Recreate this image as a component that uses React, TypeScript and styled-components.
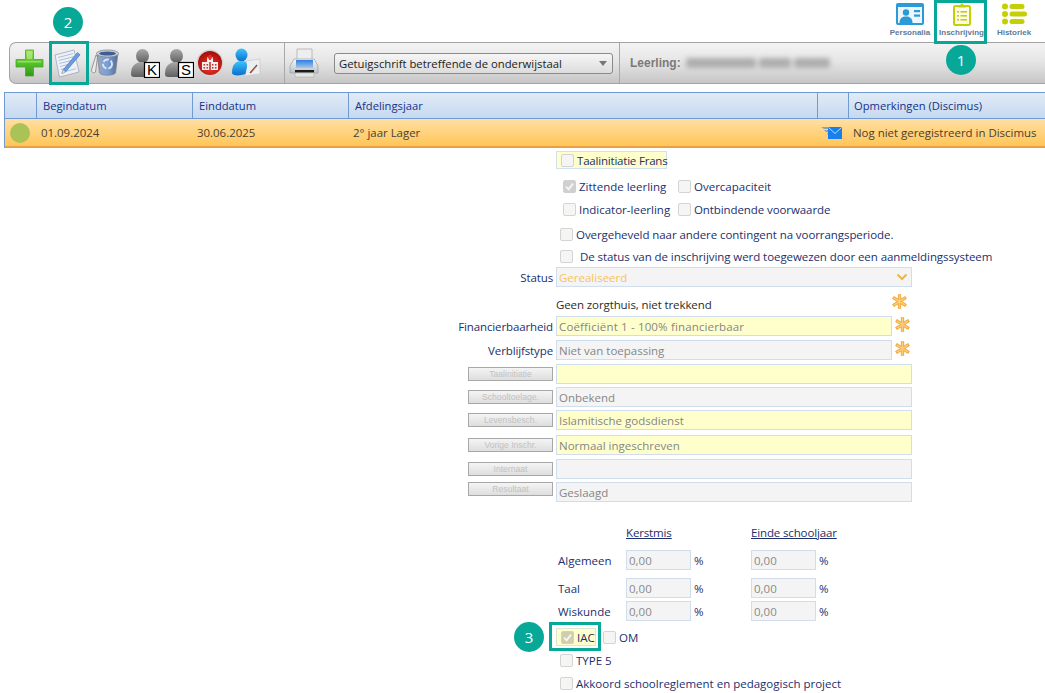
import React from "react";
import styled, { createGlobalStyle } from "styled-components";

const FONT = `"Open Sans", "Noto Sans", "Liberation Sans", sans-serif`;

const Global = createGlobalStyle`
  html, body { margin: 0; padding: 0; background: #fff; }
  body { font-family: ${FONT}; font-size: 11.5px; overflow: hidden; }
`;

const Page = styled.div`
  position: relative;
  width: 1045px;
  height: 693px;
  overflow: hidden;
`;

/* top tabs */
const TopBar = styled.div`
  height: 42px;
  display: flex;
  justify-content: flex-end;
  padding-right: 4px;
`;
const Tab = styled.div<{ $w: number }>`
  width: ${p => p.$w}px;
  display: flex;
  flex-direction: column;
  align-items: center;
  padding-top: 2px;
  box-sizing: border-box;
`;
const TabIcon = styled.div`
  height: 24px;
  display: flex;
  align-items: center;
  justify-content: center;
`;
const TabLabel = styled.div`
  font-family: "Liberation Sans", sans-serif;
  font-weight: 700;
  font-size: 8px;
  line-height: 10px;
  margin-top: 2px;
  color: #5d7b98;
  white-space: nowrap;
`;

/* toolbar */
const Toolbar = styled.div`
  height: 42px;
  margin-left: 9px;
  box-sizing: border-box;
  border: 1px solid #a3a3a3;
  border-right: none;
  border-radius: 7px 0 0 7px;
  background: linear-gradient(#f3f3f3, #e6e6e6 45%, #c6c6c6);
  display: flex;
  align-items: center;
`;
const ToolSlot = styled.div<{ $left: number }>`
  margin-left: ${p => p.$left}px;
  display: flex;
  align-items: center;
`;
const ToolDivider = styled.div<{ $left: number }>`
  align-self: stretch;
  width: 1px;
  background: #a8a8a8;
  margin-left: ${p => p.$left}px;
`;
const ReportSelect = styled.div`
  margin-left: 15px;
  width: 279px;
  height: 21px;
  box-sizing: border-box;
  border: 1px solid #8a8a8a;
  border-radius: 3px;
  background: linear-gradient(#f6f6f6, #dcdcdc);
  display: flex;
  align-items: center;
  justify-content: space-between;
  padding: 0 5px 0 4px;
  color: #222;
  font-size: 11.3px;
`;
const SelectArrow = styled.span`
  width: 0;
  height: 0;
  border-left: 4px solid transparent;
  border-right: 4px solid transparent;
  border-top: 5px solid #777;
`;
const StudentLabel = styled.div`
  margin-left: 10px;
  font-family: "Liberation Sans", sans-serif;
  font-weight: 700;
  font-size: 12px;
  color: #7a7a7a;
`;
const BlurredName = styled.div`
  margin-left: 5px;
  display: flex;
  gap: 3px;
  filter: blur(2.5px);
`;
const BlurBar = styled.span<{ $w: number }>`
  width: ${p => p.$w}px;
  height: 10px;
  background: #aeaeae;
  border-radius: 3px;
`;

/* table */
const Table = styled.div`
  margin: 8px 0 0 4px;
  border-left: 1px solid #6f9bd1;
`;
const TableGrid = styled.div`
  display: grid;
  grid-template-columns: 32px 156px 156px 469px 31px 1fr;
`;
const HeadRow = styled(TableGrid)`
  height: 27px;
  box-sizing: border-box;
  border-top: 1px solid #6f9bd1;
  border-bottom: 1px solid #6f9bd1;
  background: linear-gradient(#e1ebf7, #c6d9f0);
`;
const HeadCell = styled.div`
  border-right: 1px solid #6f9bd1;
  padding-left: 6px;
  display: flex;
  align-items: center;
  color: #15318a;
  font-size: 11.2px;
  &:last-child { border-right: none; padding-left: 5px; }
`;
const DataRow = styled(TableGrid)`
  height: 29px;
  box-sizing: border-box;
  border-bottom: 2px solid #e8a043;
  background: linear-gradient(#ffdfa3, #ffc658);
`;
const DataCell = styled.div`
  padding-left: 4px;
  display: flex;
  align-items: center;
  color: #4a4030;
  font-size: 11.45px;
  white-space: nowrap;
`;
const StatusDot = styled.span`
  width: 20px;
  height: 20px;
  border-radius: 50%;
  background: #a9c356;
  margin-left: 1px;
`;

/* form */
const Form = styled.div``;
const Row = styled.div<{ $top: number; $h?: number; $pad?: number }>`
  margin-top: ${p => p.$top}px;
  height: ${p => p.$h ?? 20}px;
  padding-left: ${p => p.$pad ?? 0}px;
  display: flex;
  align-items: center;
  white-space: nowrap;
`;
const Flag = styled.div`
  width: 111px;
  height: 18px;
  box-sizing: border-box;
  border: 1px solid #cfe0ef;
  background: #ffffcc;
  display: flex;
  align-items: center;
  padding-left: 4px;
  gap: 2px;
`;
const Box = styled.span<{ $on?: boolean; $tint?: boolean }>`
  width: 13px;
  height: 13px;
  flex: none;
  box-sizing: border-box;
  border: 1px solid ${p => (p.$on ? "#d0d0d0" : "#d4d4d4")};
  border-radius: 2px;
  background: ${p => (p.$on ? (p.$tint ? "#cfcfae" : "#d0d0d0") : "#f5f5f3")};
  display: inline-flex;
  align-items: center;
  justify-content: center;
`;
const CheckText = styled.span<{ $gap?: number; $track?: number }>`
  color: #1c2f6e;
  margin-left: ${p => p.$gap ?? 3}px;
  letter-spacing: ${p => p.$track ?? 0}px;
`;
const Check = styled.span<{ $width?: number; $left?: number }>`
  display: inline-flex;
  align-items: center;
  width: ${p => (p.$width ? `${p.$width}px` : "auto")};
  margin-left: ${p => p.$left ?? 0}px;
`;
const LabelCell = styled.div`
  width: 553px;
  margin-right: 3px;
  flex: none;
  display: flex;
  justify-content: flex-end;
  color: #1c2f6e;
  letter-spacing: -0.12px;
`;
const Field = styled.div<{ $wide?: boolean; $yellow?: boolean; $muted?: boolean; $track?: number }>`
  width: ${p => (p.$wide ? 356 : 336)}px;
  height: 20px;
  box-sizing: border-box;
  border: 1px solid #cfdded;
  background: ${p => (p.$yellow ? "#ffffcc" : "#f4f4f4")};
  padding: 0 3px 0 2px;
  display: flex;
  align-items: center;
  justify-content: space-between;
  color: ${p => (p.$muted ? "#f8c35c" : "#868686")};
  letter-spacing: ${p => p.$track ?? 0}px;
`;
const SideButton = styled.div<{ $raised?: boolean }>`
  width: 85px;
  height: 14px;
  box-sizing: border-box;
  border: 1px solid #a8a8a8;
  background: linear-gradient(#f4f4f4, #dedede);
  display: flex;
  align-items: center;
  justify-content: center;
  font-family: "Liberation Sans", sans-serif;
  font-size: 8.6px;
  letter-spacing: 0;
  color: #c2c2c2;
  transform: translateY(${p => (p.$raised ? -3 : 0)}px);
`;
const Plain = styled.div`
  width: 333px;
  margin-top: 2px;
  color: #2c2c2c;
  letter-spacing: -0.1px;
`;
const CareRow = styled(Row)`
  padding-left: 556px;
  align-items: flex-start;
`;
const StarSlot = styled.span<{ $up?: number }>`
  margin-left: 3px;
  display: flex;
  transform: translateY(${p => -(p.$up ?? 0)}px);
`;
const GradeLabel = styled.div`
  width: 68px;
  margin-left: 558px;
  color: #1c2f6e;
`;
const GradeHead = styled.div<{ $w: number; $left?: number }>`
  width: ${p => p.$w}px;
  margin-left: ${p => p.$left ?? 0}px;
  color: #1c2f6e;
  text-decoration: underline;
  letter-spacing: -0.14px;
`;
const GradeInput = styled.div`
  width: 65px;
  height: 20px;
  box-sizing: border-box;
  border: 1px solid #cfdded;
  background: #f4f4f4;
  padding-left: 2px;
  display: flex;
  align-items: center;
  color: #8a8a8a;
`;
const Percent = styled.span`
  width: 60px;
  box-sizing: border-box;
  padding-left: 3px;
  color: #1c2f6e;
`;
const IacBox = styled.div`
  margin-left: 556px;
  width: 40px;
  height: 18px;
  box-sizing: border-box;
  border: 1px solid #dbe6d8;
  background: #ffffcc;
  padding-left: 4px;
  display: flex;
  align-items: center;
`;

/* annotations */
const Frame = styled.div<{ $x: number; $y: number; $w: number; $h: number }>`
  position: absolute;
  left: ${p => p.$x}px;
  top: ${p => p.$y}px;
  width: ${p => p.$w}px;
  height: ${p => p.$h}px;
  box-sizing: border-box;
  border: 3px solid #08a898;
`;
const Badge = styled.div<{ $cx: number; $cy: number }>`
  position: absolute;
  left: ${p => p.$cx - 15}px;
  top: ${p => p.$cy - 15}px;
  width: 30px;
  height: 30px;
  border-radius: 50%;
  background: #08a898;
  color: #fff;
  font-size: 15px;
  display: flex;
  align-items: center;
  justify-content: center;
`;

/* drawings */
const CheckMark = () => (
  <svg width="9" height="9" viewBox="0 0 9 9">
    <path d="M1 4.6 L3.6 7.2 L8 1.6" fill="none" stroke="#f4f4f4" strokeWidth="1.9" />
  </svg>
);
const Star = () => (
  <svg width="15" height="15" viewBox="0 0 15 15">
    <g stroke="#eea83f" strokeWidth="3.3">
      <path d="M7.5 .3V14.7M1 3.4L14 11.6M14 3.4L1 11.6" />
    </g>
    <g stroke="#fdcc78" strokeWidth="1.5">
      <path d="M7.5 1V14M1.8 3.9L13.2 11.1M13.2 3.9L1.8 11.1" />
    </g>
  </svg>
);
const Chevron = () => (
  <svg width="12" height="8" viewBox="0 0 12 8">
    <path d="M1.5 1.5L6 6L10.5 1.5" fill="none" stroke="#f4b33f" strokeWidth="2" />
  </svg>
);
const PersonaliaIcon = () => (
  <svg width="28" height="22" viewBox="0 0 28 22">
    <rect width="28" height="22" rx="2" fill="#2a9bd6" />
    <rect x="2" y="4" width="24" height="16" fill="#eef6fb" />
    <circle cx="10" cy="9.5" r="3.2" fill="#2a9bd6" />
    <path d="M3.5 20c0-5 3-6.500 6.500-6.500s6.500 1.500 6.500 6.500z" fill="#2a9bd6" />
    <rect x="18" y="7" width="6" height="2.200" fill="#2a9bd6" />
    <rect x="18" y="11.500" width="6" height="2.200" fill="#2a9bd6" />
  </svg>
);
const ClipboardIcon = () => (
  <svg width="18" height="24" viewBox="0 0 18 24">
    <rect x="1" y="4" width="16" height="19" rx="1.500" fill="#fafbe8" stroke="#c4cf04" strokeWidth="2" />
    <path d="M5 5.500V3h2.500a1.500 1.500 0 0 1 3 0H13v2.500z" fill="#c4cf04" />
    <g fill="#c4cf04">
      <rect x="4" y="9" width="2" height="1.600" />
      <rect x="7.500" y="9" width="6.500" height="1.600" />
      <rect x="4" y="13" width="2" height="1.600" />
      <rect x="7.500" y="13" width="6.500" height="1.600" />
      <rect x="4" y="17" width="2" height="1.600" />
      <rect x="7.500" y="17" width="6.500" height="1.600" />
    </g>
  </svg>
);
const HistoryIcon = () => (
  <svg width="25" height="22" viewBox="0 0 25 22">
    <g fill="#c4cf04">
      <circle cx="3" cy="3.500" r="3" />
      <rect x="7.500" y="1" width="15" height="5" rx="2.500" />
      <circle cx="3" cy="11" r="3" />
      <rect x="7.500" y="8.500" width="17.500" height="5" rx="2.500" />
      <circle cx="3" cy="18.500" r="3" />
      <rect x="7.500" y="16" width="15" height="5" rx="2.500" />
    </g>
  </svg>
);
const PlusIcon = () => (
  <svg width="29" height="28" viewBox="0 0 29 28">
    <defs>
      <linearGradient id="pg" x1="0" y1="0" x2="0" y2="1">
        <stop offset="0" stopColor="#9fe35f" />
        <stop offset=".5" stopColor="#56c22c" />
        <stop offset="1" stopColor="#2f9a17" />
      </linearGradient>
    </defs>
    <path d="M10.500 1h8v9.500H28v7.500h-9.500V27h-8V18H1v-7.500h9.500z" fill="url(#pg)" stroke="#4aa52b" strokeWidth=".8" />
    <path d="M12 2.500h5V10h-5zM2.500 12H26v1.500H2.500z" fill="#c3f08f" opacity=".55" />
  </svg>
);
const NotepadIcon = () => (
  <svg width="27" height="29" viewBox="0 0 27 29">
    <path d="M1 6L20 1L25 23L5.500 28z" fill="#eef2f8" stroke="#9aa7ba" strokeWidth=".8" />
    <g stroke="#9db2d3" strokeWidth=".8">
      <path d="M4 8.500L19 4.600M4.700 11.500L20 7.600M5.400 14.500L18 11.300M6 17.500L16 15M6.700 20.500L14 18.600M7.400 23.500L22 19.700" />
    </g>
    <path d="M9 21L23.500 3.500L26 5.800L11.500 23L8 24.500z" fill="#6c9cdf" stroke="#3c6cb4" strokeWidth=".6" />
    <path d="M8 24.500L9 21L11.500 23z" fill="#f3d6ac" />
  </svg>
);
const BinIcon = () => (
  <svg width="30" height="28" viewBox="0 0 30 28">
    <defs>
      <linearGradient id="bg" x1="0" y1="0" x2="1" y2="0">
        <stop offset="0" stopColor="#9aa8bd" />
        <stop offset=".5" stopColor="#7a9fd8" />
        <stop offset="1" stopColor="#566c8e" />
      </linearGradient>
    </defs>
    <path d="M6 6L1.500 21c0 2.500 2 3.500 4 2L7.500 8z" fill="#ececec" stroke="#8d8d8d" strokeWidth=".9" />
    <path d="M7 4L9.500 24c2 3 14 3 16 0L28 4z" fill="url(#bg)" stroke="#7b7f88" strokeWidth=".7" />
    <ellipse cx="17.500" cy="4.500" rx="11" ry="3.500" fill="#d2d5da" stroke="#7f8694" strokeWidth=".8" />
    <ellipse cx="17.500" cy="4.500" rx="8.500" ry="2" fill="#3d5f96" />
    <circle cx="17.500" cy="15" r="4.500" fill="none" stroke="#dbe7f8" strokeWidth="1.800" strokeDasharray="6 2" />
  </svg>
);
const PersonLetter = ({ letter, id }: { letter: string; id: string }) => (
  <svg width="30" height="30" viewBox="0 0 30 30">
    <defs>
      <linearGradient id={id} x1="0" y1="0" x2="0" y2="1">
        <stop offset="0" stopColor="#a8a8a8" />
        <stop offset="1" stopColor="#5f5f5f" />
      </linearGradient>
    </defs>
    <ellipse cx="12.500" cy="8" rx="6.500" ry="7" fill={`url(#${id})`} />
    <path d="M1 26c0-9 5-12 11.500-12S22 17 22 29H4C2 29 1 28 1 26z" fill={`url(#${id})`} />
    <rect x="14.500" y="14.500" width="15" height="15" fill="#fff" stroke="#000" strokeWidth="1.200" />
    <text x="22" y="27" textAnchor="middle" fontFamily="Liberation Sans, sans-serif" fontSize="15" fill="#000">{letter}</text>
  </svg>
);
const HospitalIcon = () => (
  <svg width="28" height="28" viewBox="0 0 28 28">
    <defs>
      <radialGradient id="hg" cx=".5" cy=".65" r=".6">
        <stop offset="0" stopColor="#ee3a30" />
        <stop offset="1" stopColor="#a90f0c" />
      </radialGradient>
    </defs>
    <circle cx="14" cy="14" r="13.500" fill="#d6d6d6" />
    <circle cx="14" cy="14" r="12" fill="url(#hg)" />
    <path d="M6 13h5V8h6v5h5v8H6z" fill="#f8eeee" />
    <path d="M13 6h2v1.500h1.500v2H15V11h-2V9.500h-1.500v-2H13z" fill="#e8332a" />
    <g fill="#c03a34">
      <rect x="7.500" y="15" width="1.600" height="1.600" />
      <rect x="10.500" y="15" width="1.600" height="1.600" />
      <rect x="15.900" y="15" width="1.600" height="1.600" />
      <rect x="18.900" y="15" width="1.600" height="1.600" />
      <rect x="7.500" y="18" width="1.600" height="1.600" />
      <rect x="10.500" y="18" width="1.600" height="1.600" />
      <rect x="15.900" y="18" width="1.600" height="1.600" />
      <rect x="18.900" y="18" width="1.600" height="1.600" />
      <rect x="13.200" y="13" width="1.600" height="8" />
    </g>
  </svg>
);
const PersonChartIcon = () => (
  <svg width="30" height="30" viewBox="0 0 30 30">
    <defs>
      <linearGradient id="blu" x1="0" y1="0" x2="0" y2="1">
        <stop offset="0" stopColor="#3cc4fa" />
        <stop offset="1" stopColor="#0a6ed0" />
      </linearGradient>
    </defs>
    <path d="M15 13L29 11V26L14 28z" fill="#eceef0" stroke="#c2c5c9" strokeWidth=".6" />
    <path d="M19 25L26 17" stroke="#a0382e" strokeWidth="1.200" />
    <path d="M20 25L26 18" stroke="#777" strokeWidth=".6" />
    <ellipse cx="10.500" cy="7" rx="6" ry="6.500" fill="url(#blu)" />
    <path d="M1 25c0-9 4-12 9.500-12S16 15 16 19L14.500 26C9 28 1 28 1 25z" fill="url(#blu)" />
  </svg>
);
const PrinterIcon = () => (
  <svg width="30" height="30" viewBox="0 0 30 30">
    <defs>
      <linearGradient id="pr" x1="0" y1="0" x2="0" y2="1">
        <stop offset="0" stopColor="#f8f8f8" />
        <stop offset="1" stopColor="#bcc0c6" />
      </linearGradient>
      <linearGradient id="ps" x1="0" y1="0" x2="0" y2="1">
        <stop offset="0" stopColor="#2f7fe0" />
        <stop offset="1" stopColor="#a6c6ea" />
      </linearGradient>
    </defs>
    <path d="M8 1H23V12H8z" fill="#eeeeee" stroke="#a8a8a8" strokeWidth=".7" />
    <path d="M5 11H25L29 18V25H1V18z" fill="url(#pr)" stroke="#9a9ea4" strokeWidth=".7" />
    <rect x="7" y="12" width="17" height="8" fill="url(#ps)" />
    <rect x="6" y="22" width="19" height="2.500" fill="#1b1b1b" />
    <path d="M6 25H25V29H6z" fill="#e6e6e6" stroke="#ababab" strokeWidth=".6" />
  </svg>
);
const MailIcon = () => (
  <svg width="21" height="12" viewBox="0 0 21 12">
    <g fill="#8fa0b0">
      <path d="M0 0h7v2H3zM3 3h5v2H5zM6 6h3v2H7z" />
    </g>
    <rect x="7" y="0" width="14" height="12" fill="#1580ee" />
    <path d="M7.500 .5L14 6.500L20.500 .5" fill="none" stroke="#bcd9f7" strokeWidth="1" />
  </svg>
);

const Cb = ({ on, tint }: { on?: boolean; tint?: boolean }) => (
  <Box $on={on} $tint={tint}>{on && <CheckMark />}</Box>
);

type Line = { label: string; value: string; yellow?: boolean; top: number; raised?: boolean };
const lines: Line[] = [
  { label: "Taalinitiatie", value: "", yellow: true, top: 4 },
  { label: "Schooltoelage.", value: "Onbekend", top: 3 },
  { label: "Levensbesch.", value: "Islamitische godsdienst", yellow: true, top: 3 },
  { label: "Vorige Inschr.", value: "Normaal ingeschreven", yellow: true, top: 5 },
  { label: "Internaat", value: "", top: 4 },
  { label: "Resultaat", value: "Geslaagd", top: 3, raised: true },
];
const grades = [
  { label: "Algemeen", top: 8 },
  { label: "Taal", top: 8 },
  { label: "Wiskunde", top: 3 },
];

export default function App() {
  return (
    <Page>
      <Global />
      <TopBar>
        <Tab $w={52}>
          <TabIcon><PersonaliaIcon /></TabIcon>
          <TabLabel>Personalia</TabLabel>
        </Tab>
        <Tab $w={51}>
          <TabIcon><ClipboardIcon /></TabIcon>
          <TabLabel>Inschrijving</TabLabel>
        </Tab>
        <Tab $w={54}>
          <TabIcon><HistoryIcon /></TabIcon>
          <TabLabel>Historiek</TabLabel>
        </Tab>
      </TopBar>

      <Toolbar>
        <ToolSlot $left={5}><PlusIcon /></ToolSlot>
        <ToolSlot $left={10}><NotepadIcon /></ToolSlot>
        <ToolSlot $left={9}><BinIcon /></ToolSlot>
        <ToolSlot $left={10}><PersonLetter letter="K" id="pk" /></ToolSlot>
        <ToolSlot $left={4}><PersonLetter letter="S" id="ps2" /></ToolSlot>
        <ToolSlot $left={2}><HospitalIcon /></ToolSlot>
        <ToolSlot $left={7}><PersonChartIcon /></ToolSlot>
        <ToolDivider $left={23} />
        <ToolSlot $left={4}><PrinterIcon /></ToolSlot>
        <ReportSelect>
          Getuigschrift betreffende de onderwijstaal
          <SelectArrow />
        </ReportSelect>
        <ToolDivider $left={6} />
        <StudentLabel>Leerling:</StudentLabel>
        <BlurredName>
          <BlurBar $w={70} />
          <BlurBar $w={32} />
          <BlurBar $w={36} />
        </BlurredName>
      </Toolbar>

      <Table>
        <HeadRow>
          <HeadCell />
          <HeadCell>Begindatum</HeadCell>
          <HeadCell>Einddatum</HeadCell>
          <HeadCell>Afdelingsjaar</HeadCell>
          <HeadCell />
          <HeadCell>Opmerkingen (Discimus)</HeadCell>
        </HeadRow>
        <DataRow>
          <DataCell><StatusDot /></DataCell>
          <DataCell>01.09.2024</DataCell>
          <DataCell>30.06.2025</DataCell>
          <DataCell>2° jaar Lager</DataCell>
          <DataCell><ToolSlot $left={-1}><MailIcon /></ToolSlot></DataCell>
          <DataCell>Nog niet geregistreerd in Discimus</DataCell>
        </DataRow>
      </Table>

      <Form>
        <Row $top={3} $h={18} $pad={556}>
          <Flag>
            <Cb />
            <CheckText $gap={1} $track={-0.2}>Taalinitiatie Frans</CheckText>
          </Flag>
        </Row>
        <Row $top={7} $pad={563}>
          <Check $width={115}><Cb on /><CheckText>Zittende leerling</CheckText></Check>
          <Check><Cb /><CheckText>Overcapaciteit</CheckText></Check>
        </Row>
        <Row $top={3} $pad={563}>
          <Check $width={115}><Cb /><CheckText>Indicator-leerling</CheckText></Check>
          <Check><Cb /><CheckText $track={-0.09}>Ontbindende voorwaarde</CheckText></Check>
        </Row>
        <Row $top={5} $pad={560}>
          <Cb /><CheckText $track={-0.07}>Overgeheveld naar andere contingent na voorrangsperiode.</CheckText>
        </Row>
        <Row $top={2} $pad={560}>
          <Cb /><CheckText $gap={7} $track={-0.07}>De status van de inschrijving werd toegewezen door een aanmeldingssysteem</CheckText>
        </Row>
        <Row $top={1}>
          <LabelCell>Status</LabelCell>
          <Field $wide $muted>Gerealiseerd<Chevron /></Field>
        </Row>
        <CareRow $top={8}>
          <Plain>Geen zorgthuis, niet trekkend</Plain>
          <StarSlot $up={1}><Star /></StarSlot>
        </CareRow>
        <Row $top={1}>
          <LabelCell>Financierbaarheid</LabelCell>
          <Field $yellow $track={0.15}>Coëfficiënt 1 - 100% financierbaar</Field>
          <StarSlot $up={2}><Star /></StarSlot>
        </Row>
        <Row $top={4}>
          <LabelCell>Verblijfstype</LabelCell>
          <Field>Niet van toepassing</Field>
          <StarSlot $up={2}><Star /></StarSlot>
        </Row>
        {lines.map(l => (
          <Row key={l.label} $top={l.top}>
            <LabelCell><SideButton $raised={l.raised}>{l.label}</SideButton></LabelCell>
            <Field $wide $yellow={l.yellow}>{l.value}</Field>
          </Row>
        ))}
        <Row $top={20}>
          <GradeHead $w={125} $left={626}>Kerstmis</GradeHead>
          <GradeHead $w={100}>Einde schooljaar</GradeHead>
        </Row>
        {grades.map(g => (
          <Row key={g.label} $top={g.top}>
            <GradeLabel>{g.label}</GradeLabel>
            <GradeInput>0,00</GradeInput>
            <Percent>%</Percent>
            <GradeInput>0,00</GradeInput>
            <Percent>%</Percent>
          </Row>
        ))}
        <Row $top={7} $h={18}>
          <IacBox><Cb on tint /><CheckText>IAC</CheckText></IacBox>
          <Check $left={7}><Cb /><CheckText>OM</CheckText></Check>
        </Row>
        <Row $top={4} $pad={560}>
          <Cb /><CheckText>TYPE 5</CheckText>
        </Row>
        <Row $top={3} $pad={560}>
          <Cb /><CheckText>Akkoord schoolreglement en pedagogisch project</CheckText>
        </Row>
      </Form>

      <Frame $x={934} $y={0} $w={53} $h={44} />
      <Badge $cx={961} $cy={60}>1</Badge>
      <Frame $x={49} $y={41} $w={40} $h={44} />
      <Badge $cx={68} $cy={22}>2</Badge>
      <Frame $x={549} $y={622} $w={52} $h={29} />
      <Badge $cx={529} $cy={637}>3</Badge>
    </Page>
  );
}
